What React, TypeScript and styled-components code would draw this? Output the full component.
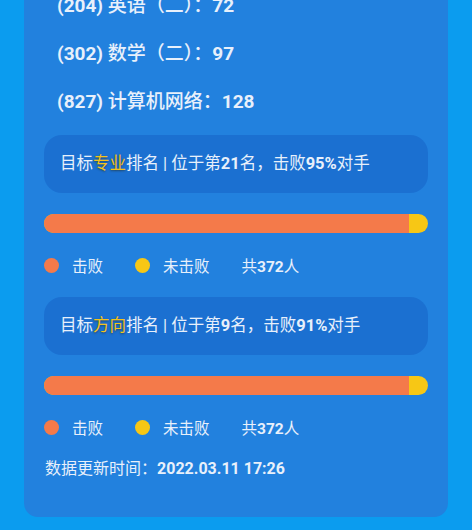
import styled, { createGlobalStyle } from 'styled-components';

const GlobalStyle = createGlobalStyle`
	html,
	body {
		margin: 0;
		padding: 0;
		background: #0b9cef;
	}
	body {
		font-family: Roboto, 'Noto Sans CJK SC', sans-serif;
		color: #e8f0fb;
	}
`;

const subjects = [
	{ code: '204', name: '英语（二）：', score: 72 },
	{ code: '302', name: '数学（二）：', score: 97 },
	{ code: '827', name: '计算机网络：', score: 128 },
];

const rankings = [
	{ key: '专业', place: 21, beaten: 95, total: 372 },
	{ key: '方向', place: 9, beaten: 91, total: 372 },
];

export default function App() {
	return (
		<>
			<GlobalStyle />
			<Page>
				<Card>
					<SubjectList>
						{subjects.map((s) => (
							<SubjectRow key={s.code}>
								<b>({s.code})</b> {s.name}
								<b>{s.score}</b>
							</SubjectRow>
						))}
					</SubjectList>

					{rankings.map((r) => (
						<RankBlock key={r.key}>
							<RankBox>
								目标<Highlight>{r.key}</Highlight>排名 | 位于第<b>{r.place}</b>名，击败
								<b>{r.beaten}%</b>对手
							</RankBox>
							<Bar>
								<BarFill style={{ width: '95%' }} />
							</Bar>
							<Legend>
								<LegendItem>
									<Dot $color="#f47a4a" />
									<span>击败</span>
								</LegendItem>
								<LegendItem>
									<Dot $color="#f7c715" />
									<span>未击败</span>
								</LegendItem>
								<LegendItem>
									<span>
										共<b>{r.total}</b>人
									</span>
								</LegendItem>
							</Legend>
						</RankBlock>
					))}

					<UpdateTime>
						数据更新时间：<b>2022.03.11 17:26</b>
					</UpdateTime>
				</Card>
			</Page>
		</>
	);
}

const Page = styled.div`
	height: 530px;
	overflow: hidden;
	padding: 0 24px;
	box-sizing: border-box;
	background: #0b9cef;
`;

const Card = styled.div`
	margin-top: -30px;
	width: 424px;
	box-sizing: border-box;
	padding: 12px 20px 38px;
	background: #2281de;
	border-radius: 0 0 14px 14px;
`;

const SubjectList = styled.div`
	padding-left: 13px;
	margin-bottom: 9px;
`;

const SubjectRow = styled.div`
	height: 48px;
	line-height: 48px;
	font-size: 19px;
	font-weight: 500;
	white-space: pre;

	b {
		font-weight: 700;
	}
`;

const RankBlock = styled.div`
	display: flex;
	flex-direction: column;
	margin-bottom: 22px;
`;

const RankBox = styled.div`
	height: 58px;
	line-height: 58px;
	padding-left: 16px;
	border-radius: 18px;
	background: #1b70d1;
	font-size: 16.5px;
	white-space: pre;

	b {
		font-weight: 700;
	}
`;

const Highlight = styled.span`
	color: #f3c31d;
	text-shadow: 0 1px 2px rgba(40, 40, 20, 0.6);
`;

const Bar = styled.div`
	margin-top: 21px;
	height: 19px;
	border-radius: 10px;
	background: #f7c715;
	overflow: hidden;
`;

const BarFill = styled.div`
	height: 100%;
	background: #f47a4a;
`;

const Legend = styled.div`
	margin-top: 22px;
	height: 20px;
	display: flex;
	align-items: center;
	gap: 32px;
	font-size: 15.5px;

	b {
		font-weight: 700;
	}
`;

const LegendItem = styled.div`
	display: flex;
	align-items: center;
	gap: 13px;
`;

const Dot = styled.span<{ $color: string }>`
	width: 15px;
	height: 15px;
	border-radius: 50%;
	background: ${(p) => p.$color};
`;

const UpdateTime = styled.div`
	margin-top: 3px;
	height: 20px;
	line-height: 20px;
	padding-left: 1px;
	font-size: 16px;
	white-space: pre;

	b {
		font-weight: 700;
	}
`;
